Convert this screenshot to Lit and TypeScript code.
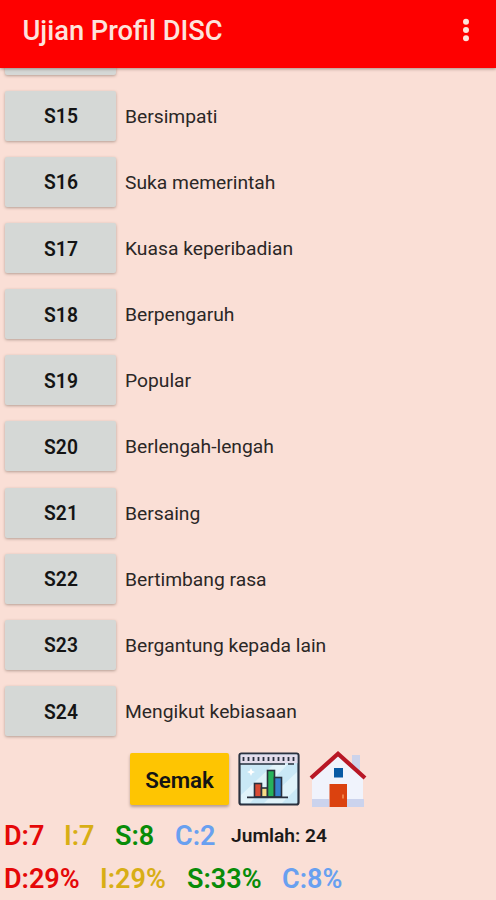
import { LitElement, html, css, svg } from "lit";
import { customElement } from "lit/decorators.js";

const items: [string, string][] = [
  ["", ""],
  ["S15", "Bersimpati"],
  ["S16", "Suka memerintah"],
  ["S17", "Kuasa keperibadian"],
  ["S18", "Berpengaruh"],
  ["S19", "Popular"],
  ["S20", "Berlengah-lengah"],
  ["S21", "Bersaing"],
  ["S22", "Bertimbang rasa"],
  ["S23", "Bergantung kepada lain"],
  ["S24", "Mengikut kebiasaan"],
];

@customElement("app-root")
export class AppRoot extends LitElement {
  static styles = css`
    :host {
      display: flex;
      flex-direction: column;
      width: 496px;
      height: 900px;
      overflow: hidden;
      background: #fadfd6;
      font-family: Roboto, "Liberation Sans", sans-serif;
      color: #1c1a19;
    }
    header {
      flex: none;
      height: 68px;
      box-sizing: border-box;
      padding: 0 20px 5px 22.5px;
      display: flex;
      align-items: center;
      justify-content: space-between;
      background: #fe0000;
      color: #fde3dc;
      box-shadow: 0 1px 3px rgba(90, 60, 50, 0.5);
      z-index: 1;
    }
    h1 {
      margin: 0;
      font-size: 27.3px;
      line-height: 33px;
      font-weight: 500;
    }
    .more {
      display: block;
      width: 20px;
      height: 28px;
      margin-top: -3px;
    }
    .list {
      flex: none;
      height: 676.1px;
      display: flex;
      flex-direction: column;
      justify-content: flex-end;
      overflow: hidden;
    }
    .row {
      flex: none;
      height: 66.15px;
      display: flex;
      align-items: center;
      padding-left: 5px;
      gap: 9px;
    }
    button {
      border: 0;
      padding: 0;
      margin: 0;
      font-family: inherit;
      color: #141414;
      border-radius: 2px;
    }
    .code {
      width: 111px;
      height: 50px;
      background: #d5d8d6;
      font-size: 19.3px;
      font-weight: 600;
      padding: 2px 0 0 1px;
      box-shadow: 0 1px 3px rgba(80, 60, 50, 0.4);
    }
    .label {
      font-size: 19.25px;
      line-height: 24px;
      padding-top: 2px;
      color: #2b2726;
    }
    .actions {
      flex: none;
      height: 70px;
      display: flex;
      align-items: center;
      padding-left: 130px;
    }
    .check {
      width: 99px;
      height: 52px;
      background: #fec502;
      font-size: 22.3px;
      font-weight: 600;
      padding-top: 1px;
      box-shadow: 0 2px 3px rgba(80, 60, 50, 0.4);
    }
    .chart {
      width: 62px;
      height: 54px;
      margin-left: 9px;
    }
    .house {
      width: 58px;
      height: 58px;
      margin-left: 9px;
    }
    .scores {
      flex: none;
      height: 43px;
      display: grid;
      align-items: center;
      padding-left: 4px;
      box-sizing: border-box;
      font-size: 27px;
      font-weight: 600;
      white-space: nowrap;
    }
    .counts {
      grid-template-columns: 60px 51px 60px 56px auto;
    }
    .percents {
      grid-template-columns: 96px 87px 95px auto;
    }
    .d { color: #e50808; }
    .i { color: #d8ae15; }
    .s { color: #088c08; }
    .c { color: #68a0f0; }
    .total {
      font-size: 19.2px;
    }
  `;

  private chart() {
    return svg`<svg class="chart" viewBox="0 0 62 54">
      <rect x="1.5" y="1.5" width="59" height="51" rx="2" fill="#c9e8f6" stroke="#29303e" stroke-width="2.2"/>
      <path d="M3 43 L36 12 H50 L12 51 H3Z M26 51 L59 20 V36 L44 51Z" fill="#e0f3fa"/>
      <rect x="2.6" y="2.6" width="56.8" height="8.6" fill="#e3ddec"/>
      <path d="M5.5 5v4M10.5 5v4M15.5 5v4M20.5 5v4M25.5 5v4M30.5 5v4M35.5 5v4M40.5 5v4M45.5 5v4M50.5 5v4M55.5 5v4" stroke="#29303e" stroke-width="1.8"/>
      <path d="M2 12H47M50 12H56" stroke="#29303e" stroke-width="1.7"/>
      <path d="M13 16l1.2 2.8L17 20l-2.8 1.2L13 24l-1.2-2.8L9 20l2.8-1.2Z" fill="#fff"/>
      <g stroke="#29303e" stroke-width="1.6">
        <rect x="16.5" y="31.5" width="7" height="13.5" fill="#d94b34"/>
        <rect x="23.5" y="36" width="6" height="9" fill="#f7dc86"/>
        <rect x="29.5" y="18.5" width="7" height="26.5" fill="#27b25b"/>
        <rect x="36.5" y="25.5" width="7" height="19.5" fill="#3580cc"/>
        <path d="M9 45.3H50" stroke-width="1.8"/>
      </g>
    </svg>`;
  }

  private house() {
    return svg`<svg class="house" viewBox="0 0 58 58">
      <path d="M43 5h8v22h-8z" fill="#ccd3eb"/>
      <path d="M3 27 29 5 54 28V57H3Z" fill="#f0f3fc"/>
      <path d="M3 49H20V57H3ZM38 49H55V57H38Z" fill="#cbd3ed"/>
      <path d="M2 28 29 3.8 56 28" fill="none" stroke="#b81725" stroke-width="4.2"/>
      <rect x="25" y="18" width="9" height="9.5" fill="#0759a4"/>
      <rect x="20.5" y="34" width="17.5" height="23" fill="#db420f"/>
      <path d="M34 44.5v4" stroke="#f58b52" stroke-width="1.7"/>
    </svg>`;
  }

  render() {
    return html`
      <header>
        <h1>Ujian Profil DISC</h1>
        <svg class="more" viewBox="0 0 20 28" fill="#fde3dc">
          <circle cx="10" cy="5.8" r="3" />
          <circle cx="10" cy="14" r="3" />
          <circle cx="10" cy="22.2" r="3" />
        </svg>
      </header>
      <div class="list">
        ${items.map(
          ([code, label]) => html`<div class="row">
            <button class="code">${code}</button>
            <span class="label">${label}</span>
          </div>`
        )}
      </div>
      <div class="actions">
        <button class="check">Semak</button>
        ${this.chart()} ${this.house()}
      </div>
      <div class="scores counts">
        <span class="d">D:7</span><span class="i">I:7</span><span class="s">S:8</span
        ><span class="c">C:2</span><span class="total">Jumlah: 24</span>
      </div>
      <div class="scores percents">
        <span class="d">D:29%</span><span class="i">I:29%</span><span class="s">S:33%</span
        ><span class="c">C:8%</span>
      </div>
    `;
  }
}
